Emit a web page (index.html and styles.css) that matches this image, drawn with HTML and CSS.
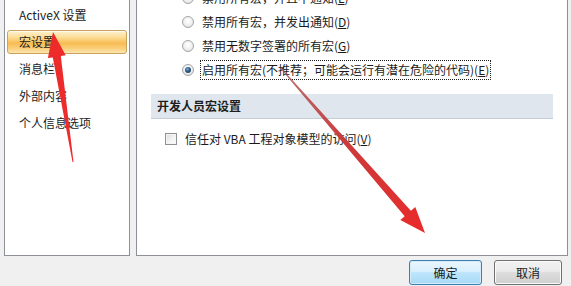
FILE: index.html
```html
<!DOCTYPE html>
<html lang="zh-CN">
<head>
<meta charset="utf-8">
<title>信任中心 - 宏设置</title>
<link rel="stylesheet" href="styles.css">
</head>
<body>
<div class="dialog">
  <div class="main">
    <ul class="nav">
      <li>ActiveX 设置</li>
      <li class="active">宏设置</li>
      <li>消息栏</li>
      <li>外部内容</li>
      <li>个人信息选项</li>
    </ul>
    <div class="content">
      <div class="opt"><span class="radio"></span><span class="lbl">禁用所有宏，并且不通知(<u>L</u>)</span></div>
      <div class="opt"><span class="radio"></span><span class="lbl">禁用所有宏，并发出通知(<u>D</u>)</span></div>
      <div class="opt"><span class="radio"></span><span class="lbl">禁用无数字签署的所有宏(<u>G</u>)</span></div>
      <div class="opt"><span class="radio checked"></span><span class="lbl focus">启用所有宏(不推荐；可能会运行有潜在危险的代码)(<u>E</u>)</span></div>
      <div class="section">开发人员宏设置</div>
      <div class="check-row"><span class="checkbox"></span><span class="lbl">信任对 VBA 工程对象模型的访问(<u>V</u>)</span></div>
    </div>
  </div>
  <div class="buttons">
    <button class="btn primary">确定</button>
    <button class="btn cancel">取消</button>
  </div>
  <svg class="arrows" width="571" height="286" viewBox="0 0 571 286">
    <defs>
      <linearGradient id="g2" gradientUnits="userSpaceOnUse" x1="280" y1="88" x2="425" y2="253">
        <stop offset="0" stop-color="#a84848" stop-opacity="0.75"/>
        <stop offset="0.45" stop-color="#cc3b3b"/>
        <stop offset="1" stop-color="#ea2a2a"/>
      </linearGradient>
    </defs>
    <polygon fill="#ee2b2b" points="53,52 65.7,75.3 60.8,76.0 73.5,182 72.5,182 52.8,77.4 47.9,78.1"/>
    <polygon fill="url(#g2)" points="425,253 400.3,240.1 404.7,236.2 280,88 281,87.5 410.9,230.7 415.3,226.9"/>
  </svg>
</div>
</body>
</html>
```

FILE: styles.css
```css
html, body {
  margin: 0;
  padding: 0;
}

body {
  width: 571px;
  height: 286px;
  overflow: hidden;
  background: #f0f0f0;
  font-family: "Noto Sans CJK SC", "Noto Sans", sans-serif;
  font-size: 12px;
  color: #1b1b1b;
}

.dialog {
  position: relative;
  width: 571px;
  height: 286px;
}

.main {
  display: flex;
  gap: 6px;
  margin-top: -20px;
  height: 276px;
  padding-left: 4px;
}

.nav {
  list-style: none;
  margin: 0;
  width: 120px;
  padding: 22px 2px 0 2px;
  border: 1px solid #8d9097;
  background: #fff;
  display: flex;
  flex-direction: column;
  gap: 3px;
}

.nav li {
  box-sizing: border-box;
  height: 24px;
  line-height: 22px;
  padding-left: 11px;
  border: 1px solid transparent;
  border-radius: 3px;
  white-space: nowrap;
}

.nav li.active {
  border-color: #c9a35b;
  background: linear-gradient(#fdf1d0 0%, #fcdc93 30%, #f8bb52 55%, #fad07c 80%, #fde6b2 100%);
  box-shadow: inset 0 1px 0 rgba(255, 255, 255, 0.7);
}

.content {
  width: 430px;
  border: 1px solid #8d9097;
  background: #fff;
  padding-top: 5px;
}

.opt {
  display: flex;
  align-items: center;
  height: 24px;
  padding-left: 45px;
  white-space: nowrap;
}

.radio {
  flex: none;
  box-sizing: border-box;
  width: 12px;
  height: 12px;
  margin-right: 6px;
  border-radius: 50%;
  border: 1px solid #a3a6aa;
  background: radial-gradient(circle at 50% 40%, #ffffff 0%, #f1f1f1 50%, #d6d8db 100%);
  position: relative;
}

.radio.checked::after {
  content: "";
  position: absolute;
  left: 2px;
  top: 2px;
  width: 6px;
  height: 6px;
  border-radius: 50%;
  background: radial-gradient(circle at 40% 35%, #7fa8cf 0%, #2c5a86 45%, #15314f 100%);
}

.lbl {
  display: inline-block;
  padding: 1px;
  line-height: 16px;
  border: 1px dotted transparent;
}

.lbl.focus {
  border-color: #202020;
}

.lbl u {
  text-decoration: underline;
  text-underline-offset: 1px;
}

.section {
  box-sizing: border-box;
  height: 25px;
  margin: 12px 14px 0 14px;
  padding-left: 6px;
  line-height: 24px;
  background: #dfe6ee;
  border-bottom: 1px solid #c5ced8;
  font-weight: bold;
  color: #1e1e1e;
}

.check-row {
  display: flex;
  align-items: center;
  height: 20px;
  margin-top: 10px;
  padding-left: 28px;
  white-space: nowrap;
}

.checkbox {
  flex: none;
  box-sizing: border-box;
  width: 12px;
  height: 12px;
  margin-right: 6px;
  border: 1px solid #8e9092;
  background: linear-gradient(135deg, #dcdcdc 0%, #f4f4f4 60%, #ffffff 100%);
  box-shadow: inset 0 0 0 1px #f5f5f5;
}

.buttons {
  display: flex;
  justify-content: flex-end;
  gap: 12px;
  margin-top: 4px;
  padding-right: 9px;
}

.btn {
  box-sizing: border-box;
  height: 25px;
  padding: 0;
  font-family: "Noto Sans CJK SC", "Noto Sans", sans-serif;
  font-size: 12px;
  color: #1b1b1b;
  border-radius: 3px;
}

.btn.primary {
  width: 73px;
  border: 1px solid #3c7fb1;
  background: linear-gradient(#eaf6fd 0%, #d9f0fc 45%, #bee6fd 50%, #a7d9f5 100%);
  box-shadow: inset 0 0 0 1px #d4ecfa;
}

.btn.cancel {
  width: 68px;
  border: 1px solid #707070;
  background: linear-gradient(#f2f2f2 0%, #ebebeb 45%, #dddddd 50%, #cfcfcf 100%);
  box-shadow: inset 0 0 0 1px #fbfbfb;
}

.arrows {
  position: absolute;
  left: 0;
  top: 0;
  pointer-events: none;
}
```
